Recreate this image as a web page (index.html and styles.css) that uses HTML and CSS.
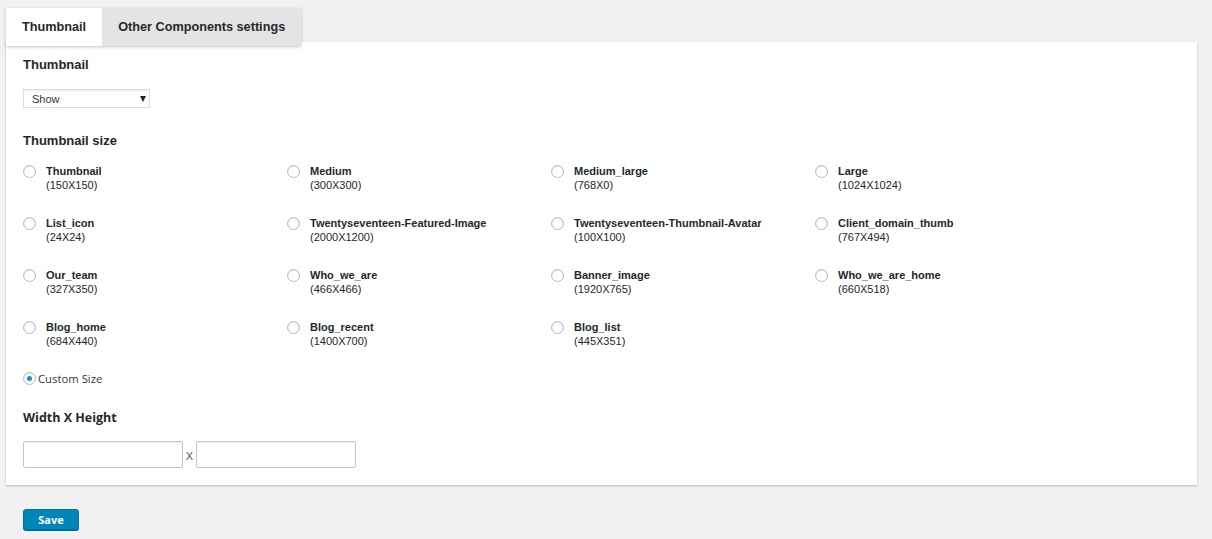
FILE: index.html
```html
<!DOCTYPE html>
<html>
<head>
<meta charset="utf-8">
<link rel="stylesheet" href="styles.css">
</head>
<body>
<div class="tabs">
  <div class="tab active">Thumbnail</div>
  <div class="tab">Other Components settings</div>
</div>
<div class="panel">
  <h3 class="heading">Thumbnail</h3>
  <div class="select"><span>Show</span><i class="arrow"></i></div>
  <h3 class="heading sizes-heading">Thumbnail size</h3>
  <div class="grid">
    <div class="opt"><span class="radio"></span><div class="lbl"><b>Thumbnail</b><span>(150X150)</span></div></div>
    <div class="opt"><span class="radio"></span><div class="lbl"><b>Medium</b><span>(300X300)</span></div></div>
    <div class="opt"><span class="radio"></span><div class="lbl"><b>Medium_large</b><span>(768X0)</span></div></div>
    <div class="opt"><span class="radio"></span><div class="lbl"><b>Large</b><span>(1024X1024)</span></div></div>
    <div class="opt"><span class="radio"></span><div class="lbl"><b>List_icon</b><span>(24X24)</span></div></div>
    <div class="opt"><span class="radio"></span><div class="lbl"><b>Twentyseventeen-Featured-Image</b><span>(2000X1200)</span></div></div>
    <div class="opt"><span class="radio"></span><div class="lbl"><b>Twentyseventeen-Thumbnail-Avatar</b><span>(100X100)</span></div></div>
    <div class="opt"><span class="radio"></span><div class="lbl"><b>Client_domain_thumb</b><span>(767X494)</span></div></div>
    <div class="opt"><span class="radio"></span><div class="lbl"><b>Our_team</b><span>(327X350)</span></div></div>
    <div class="opt"><span class="radio"></span><div class="lbl"><b>Who_we_are</b><span>(466X466)</span></div></div>
    <div class="opt"><span class="radio"></span><div class="lbl"><b>Banner_image</b><span>(1920X765)</span></div></div>
    <div class="opt"><span class="radio"></span><div class="lbl"><b>Who_we_are_home</b><span>(660X518)</span></div></div>
    <div class="opt"><span class="radio"></span><div class="lbl"><b>Blog_home</b><span>(684X440)</span></div></div>
    <div class="opt"><span class="radio"></span><div class="lbl"><b>Blog_recent</b><span>(1400X700)</span></div></div>
    <div class="opt"><span class="radio"></span><div class="lbl"><b>Blog_list</b><span>(445X351)</span></div></div>
  </div>
  <div class="custom"><span class="radio checked"></span><span class="custom-text">Custom Size</span></div>
  <h3 class="heading wh-heading">Width X Height</h3>
  <div class="dims">
    <input class="field" type="text">
    <span class="x">X</span>
    <input class="field" type="text">
  </div>
</div>
<div class="actions">
  <button class="save">Save</button>
</div>
</body>
</html>
```
FILE: styles.css
```css
* { box-sizing: border-box; }
html, body { margin: 0; }
body {
  background: #f1f1f1;
  padding: 8px 0 0 6px;
  font-family: "Liberation Sans", Arial, sans-serif;
  color: #23282d;
  width: 1212px;
  height: 539px;
  overflow: hidden;
}
.tabs {
  display: flex;
  width: max-content;
  position: relative;
  z-index: 1;
  box-shadow: 0 1px 3px rgba(0,0,0,0.22);
}
.tab {
  height: 38px;
  line-height: 38px;
  padding: 0 16px;
  font-size: 12.7px;
  font-weight: bold;
  background: #e4e4e4;
  color: #23282d;
}
.tab.active { background: #fff; }
.panel {
  margin-top: -4px;
  width: 1191px;
  background: #fff;
  box-shadow: 0 1px 2px rgba(0,0,0,0.25);
  padding: 15px 17px 17px;
}
.heading {
  margin: 0;
  font-size: 13px;
  line-height: 16px;
  font-weight: bold;
  color: #23282d;
}
.select {
  margin-top: 16px;
  width: 127px;
  height: 19px;
  border: 1px solid #dcdcdc;
  box-shadow: inset 0 1px 2px rgba(0,0,0,0.07);
  display: flex;
  align-items: center;
  justify-content: space-between;
  padding: 0 3px 0 8px;
  font-size: 11px;
  color: #32373c;
}
.arrow {
  width: 0; height: 0;
  border-left: 3.5px solid transparent;
  border-right: 3.5px solid transparent;
  border-top: 6px solid #222;
}
.sizes-heading { margin-top: 25px; }
.grid {
  margin-top: 15px;
  display: grid;
  grid-template-columns: repeat(4, 264px);
  row-gap: 24px;
}
.opt { display: flex; align-items: flex-start; }
.radio {
  flex: none;
  width: 13px;
  height: 13px;
  border: 1px solid #b4b9be;
  border-radius: 50%;
  background: #fff;
  box-shadow: inset 0 1px 2px rgba(0,0,0,0.1);
  margin-top: 0.5px;
  display: flex;
  align-items: center;
  justify-content: center;
}
.radio.checked::after {
  content: "";
  width: 5px;
  height: 5px;
  border-radius: 50%;
  background: #1e8cbe;
}
.lbl {
  margin-left: 10px;
  display: flex;
  flex-direction: column;
  font-size: 11px;
  line-height: 14px;
  color: #23282d;
}
.lbl b { font-weight: bold; }
.custom {
  margin-top: 23px;
  display: flex;
  align-items: center;
  height: 14px;
}
.custom .radio { margin-top: 0; }
.custom-text {
  margin-left: 2px;
  font-family: "Open Sans", "Noto Sans", sans-serif;
  font-size: 11.3px;
  color: #32373c;
}
.wh-heading {
  margin-top: 25px;
  font-family: "Open Sans", "Noto Sans", sans-serif;
  font-size: 12.5px;
}
.dims {
  margin-top: 15px;
  display: flex;
  align-items: center;
}
.field {
  width: 160px;
  height: 27px;
  border: 1px solid #c4c4c4;
  border-radius: 2px;
  box-shadow: inset 0 1px 2px rgba(0,0,0,0.07);
  background: #fff;
  margin: 0;
  padding: 0 6px;
}
.x {
  width: 13px;
  text-align: center;
  font-size: 11px;
  color: #555;
  padding-top: 3px;
}
.actions { padding: 24px 0 0 17px; }
.save {
  width: 56px;
  height: 21px;
  background: #0085ba;
  border: 1px solid #0073aa;
  border-radius: 3px;
  box-shadow: 0 1px 0 #006799;
  color: #fff;
  font-family: "Open Sans", "Noto Sans", sans-serif;
  font-weight: bold;
  font-size: 11px;
  padding: 0;
  line-height: 18px;
}
```
